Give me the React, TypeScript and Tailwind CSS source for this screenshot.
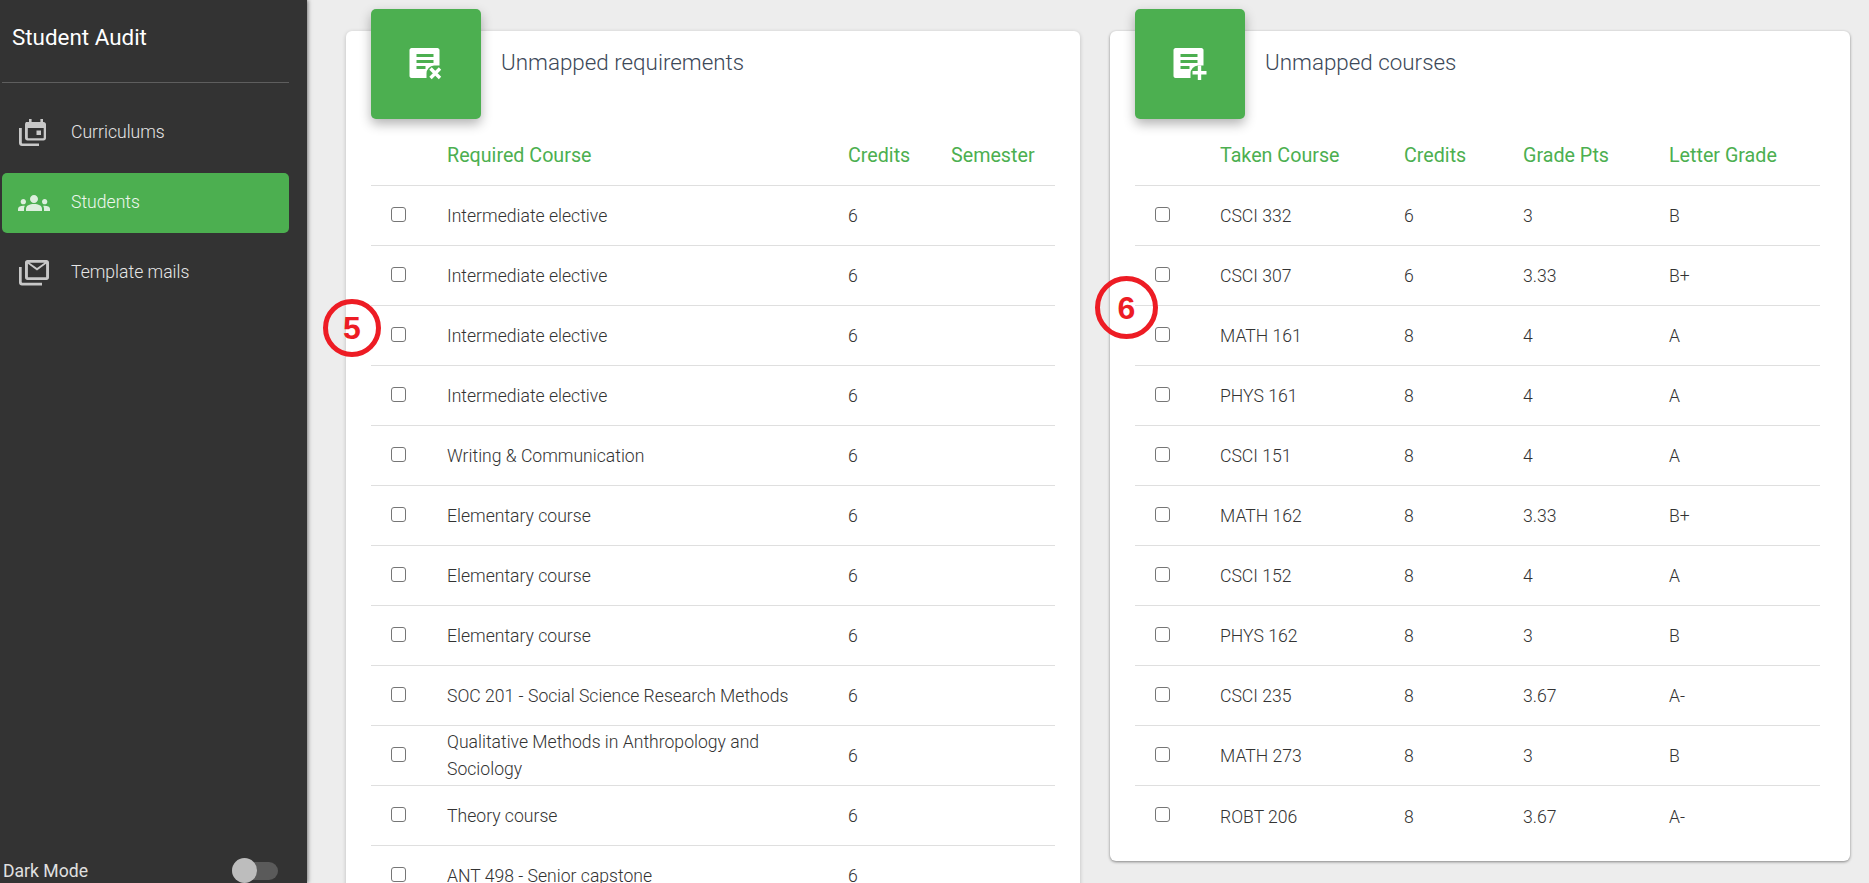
import { MdGroups } from "react-icons/md";

const requirements = [
  "Intermediate elective",
  "Intermediate elective",
  "Intermediate elective",
  "Intermediate elective",
  "Writing & Communication",
  "Elementary course",
  "Elementary course",
  "Elementary course",
  "SOC 201 - Social Science Research Methods",
  "Qualitative Methods in Anthropology and Sociology",
  "Theory course",
  "ANT 498 - Senior capstone",
];

const courses = [
  ["CSCI 332", "6", "3", "B"],
  ["CSCI 307", "6", "3.33", "B+"],
  ["MATH 161", "8", "4", "A"],
  ["PHYS 161", "8", "4", "A"],
  ["CSCI 151", "8", "4", "A"],
  ["MATH 162", "8", "3.33", "B+"],
  ["CSCI 152", "8", "4", "A"],
  ["PHYS 162", "8", "3", "B"],
  ["CSCI 235", "8", "3.67", "A-"],
  ["MATH 273", "8", "3", "B"],
  ["ROBT 206", "8", "3.67", "A-"],
];

function CurriculumIcon() {
  return (
    <svg width="30" height="30" viewBox="0 0 30 30" fill="#c8c8c8">
      <path d="M1 10h2.800v14.400c0 .6.400 1 1 1H21V28H4c-1.700 0-3-1.300-3-3z" />
      <path fillRule="evenodd" d="M8 4h3V1h2.600v3h8.800V1H25v3h.5C27 4 28 5 28 6.500V20c0 1.500-1 2.500-2.500 2.500H9.500C8 22.500 7 21.500 7 20V6.500C7 5 8 4 8 4zm1.800 6v9.800c0 .3.200.5.500.5h14.900c.3 0 .5-.2.500-.5V10z" />
      <rect x="18.500" y="12.500" width="4.500" height="4.500" />
    </svg>
  );
}

function MailsIcon() {
  return (
    <svg width="32" height="30" viewBox="0 0 32 30" fill="#c8c8c8">
      <path d="M1 9h2.700v14.800c0 .6.400 1 1 1H24v2.700H4c-1.800 0-3-1.200-3-3z" />
      <path fillRule="evenodd" d="M9.500 2h19C30 2 31 3 31 4.500v15c0 1.500-1 2.500-2.500 2.500h-19C8 22 7 21 7 19.500v-15C7 3 8 2 9.500 2zm.4 3.800v13.400h18.200V5.800L19 12.500zM11.500 4.700 19 10l7.500-5.300z" />
    </svg>
  );
}

function DocIcon({ mark }: { mark: "x" | "plus" }) {
  return (
    <svg width="34" height="34" viewBox="0 0 34 34">
      <path
        fill="#fff"
        d="M2.500 1h26c1 0 2 1 2 2v15.500H25a8 8 0 0 0-7.500 8V31h-15c-1 0-2-1-2-2V3c0-1 1-2 2-2z"
      />
      <rect x="7.500" y="7" width="17" height="3" fill="#4caf50" />
      <rect x="7.500" y="13" width="17" height="3" fill="#4caf50" />
      <rect x="7.500" y="19" width="9" height="3" fill="#4caf50" />
      {mark === "x" ? (
        <path d="M21.500 21.500 31 31M31 21.500 21.500 31" stroke="#fff" strokeWidth="3.400" />
      ) : (
        <path d="M26.500 18.500V33M19.500 25.700H33.500" stroke="#fff" strokeWidth="3.400" />
      )}
    </svg>
  );
}

function Check() {
  return <span className="mt-[-5px] block h-[15px] w-[15px] rounded-[3px] border-[1.5px] border-[#767676] bg-white" />;
}

function CardHead({ title, mark }: { title: string; mark: "x" | "plus" }) {
  return (
    <div className="flex items-start">
      <div className="mt-[-22px] flex h-[110px] w-[110px] items-center justify-center rounded-[5px] bg-[#4caf50] shadow-[0_5px_12px_rgba(0,0,0,0.3)]">
        <DocIcon mark={mark} />
      </div>
      <h2 className="ml-5 mt-[15px] text-[22.4px] font-light leading-[32px] text-[#3c4858]">{title}</h2>
    </div>
  );
}

export default function App() {
  return (
    <div className="flex h-[883px] overflow-hidden bg-[#ededed] font-['Roboto',sans-serif]">
      <aside className="flex h-full w-[307px] shrink-0 flex-col bg-[#333333] pr-[18px] pl-[2px] shadow-[1px_0_4px_rgba(0,0,0,0.5)]">
        <div className="flex h-[83px] items-center border-b border-[#5e5e5e] pb-[6px] pl-[10px] text-[22.4px] text-white">
          Student Audit
        </div>
        <nav className="mt-[20px] flex flex-col gap-[10px] text-[17.6px] font-light">
          <a className="flex h-[60px] items-center pl-[16px] text-[#e6e6e6]">
            <span className="flex w-[53px]">
              <CurriculumIcon />
            </span>
            <span className="mt-[-2px]">Curriculums</span>
          </a>
          <a className="flex h-[60px] items-center rounded-[5px] bg-[#4caf50] pl-[16px] text-[#eef7ee]">
            <span className="flex w-[53px]">
              <MdGroups size={32} color="#dcefdd" />
            </span>
            <span className="mt-[-2px]">Students</span>
          </a>
          <a className="flex h-[60px] items-center pl-[16px] text-[#e6e6e6]">
            <span className="flex w-[53px]">
              <MailsIcon />
            </span>
            <span className="mt-[-2px]">Template mails</span>
          </a>
        </nav>
        <div className="mt-auto flex h-[22px] items-center justify-between pb-[2px] pl-[1px] pr-[11px] text-[17.6px] text-[#e0e0e0]">
          Dark Mode
          <span className="relative block h-[18px] w-[46px] rounded-full bg-[#5a5a5a]">
            <span className="absolute left-0 top-[-4px] h-[25px] w-[25px] rounded-full bg-[#bdbdbd]" />
          </span>
        </div>
      </aside>

      <main className="relative flex flex-1 items-start gap-[30px] pl-[39px] pt-[31px]">
        <section className="w-[734px] shrink-0 rounded-[6px] bg-white px-[25px] shadow-[0_1px_4px_rgba(0,0,0,0.2)]">
          <CardHead title="Unmapped requirements" mark="x" />
          <div>
            <div className="grid h-[67px] grid-cols-[76px_401px_103px_105px] items-center border-b border-[#dfdfdf] pt-[7px] text-[19.7px] text-[#4caf50]">
              <span />
              <span>Required Course</span>
              <span>Credits</span>
              <span>Semester</span>
            </div>
            {requirements.map((name, i) => (
              <div
                key={i}
                className="grid h-[60px] grid-cols-[76px_401px_103px_105px] items-center border-b border-[#dfdfdf] pt-[2px] text-[17.6px] font-light text-[#333333]"
              >
                <span className="pl-[20px]">
                  <Check />
                </span>
                <span className="mt-[-1px] pr-[18px] leading-[27px]">{name}</span>
                <span>6</span>
                <span />
              </div>
            ))}
          </div>
        </section>

        <section className="w-[740px] shrink-0 rounded-[6px] bg-white pb-[15px] pl-[25px] pr-[30px] shadow-[0_1px_3px_rgba(0,0,0,0.45)]">
          <CardHead title="Unmapped courses" mark="plus" />
          <div>
            <div className="grid h-[67px] grid-cols-[85px_184px_119px_146px_1fr] items-center border-b border-[#dfdfdf] pt-[7px] text-[19.7px] text-[#4caf50]">
              <span />
              <span>Taken Course</span>
              <span>Credits</span>
              <span>Grade Pts</span>
              <span>Letter Grade</span>
            </div>
            {courses.map((row, i) => (
              <div
                key={row[0]}
                className={`grid h-[60px] grid-cols-[85px_184px_119px_146px_1fr] items-center pt-[2px] text-[17.6px] font-light text-[#333333] ${
                  i < courses.length - 1 ? "border-b border-[#dfdfdf]" : ""
                }`}
              >
                <span className="pl-[20px]">
                  <Check />
                </span>
                <span>{row[0]}</span>
                <span>{row[1]}</span>
                <span>{row[2]}</span>
                <span>{row[3]}</span>
              </div>
            ))}
          </div>
        </section>

        <div className="absolute left-[16px] top-[299px] flex h-[58px] w-[58px] items-center justify-center rounded-full border-[5px] border-[#ed1c24] font-['Liberation_Sans',sans-serif] text-[32px] font-bold text-[#ed1c24]">
          5
        </div>
        <div className="absolute left-[788px] top-[276px] flex h-[63px] w-[63px] items-center justify-center rounded-full border-[5px] border-[#ed1c24] font-['Liberation_Sans',sans-serif] text-[32px] font-bold text-[#ed1c24]">
          6
        </div>
      </main>
    </div>
  );
}
